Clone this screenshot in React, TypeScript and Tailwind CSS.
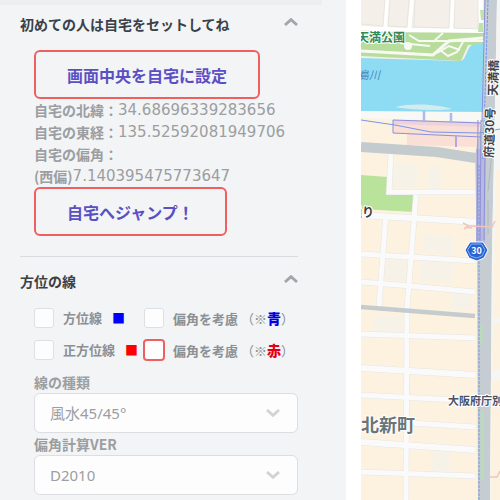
import type { ReactNode } from "react"

const jp = "font-['Noto_Sans_CJK_JP',sans-serif]"

const location = [
  { label: "自宅の北緯：", value: "34.68696339283656" },
  { label: "自宅の東経：", value: "135.52592081949706" },
  { label: "自宅の偏角：", value: "" },
  { label: "(西偏)", value: "7.140395475773647" },
]

const lines = [
  { id: "houi", name: "方位線", mark: "text-[#0000ff]", note: "青", noteColor: "text-[#0000e6]", box: "border-[#dee1e4]" },
  { id: "seihoui", name: "正方位線", mark: "text-[#ff0000]", note: "赤", noteColor: "text-[#e60012]", box: "border-[#ee6060] ring-1 ring-[#ee6060]" },
]

const selects = [
  { id: "kind", label: "線の種類", options: ["風水45/45°"] },
  { id: "ver", label: "偏角計算VER", options: ["D2010"] },
]

function Chevron({ className }: { className: string }) {
  return (
    <svg viewBox="0 0 14 8" className={className} fill="none" stroke="currentColor" strokeWidth="2.8">
      <path d="M1 1l6 5.400L13 1" />
    </svg>
  )
}

function SectionTitle({ children }: { children: ReactNode }) {
  return (
    <div className="flex items-center justify-between">
      <h2 className="text-sm leading-6 font-bold text-[#3a4148]">{children}</h2>
      <button type="button" aria-label="閉じる" className="text-[#a3a5a8]">
        <Chevron className="mb-1 h-2 w-[14px] rotate-180" />
      </button>
    </div>
  )
}

function OutlineButton({ children }: { children: ReactNode }) {
  return (
    <button
      type="button"
      className="block h-[49px] rounded-md border-2 border-[#ee6060] px-[31px] text-base leading-6 font-bold whitespace-nowrap text-[#5b4fc4]"
    >
      {children}
    </button>
  )
}

function Check({ id, className }: { id: string; className: string }) {
  return (
    <input
      id={id}
      type="checkbox"
      className={`h-5 w-5 shrink-0 appearance-none rounded-[3px] border bg-[#fdfdfe] checked:bg-[#5b4fc4] ${className}`}
    />
  )
}

function Sidebar() {
  return (
    <aside className="w-[346px] shrink-0 bg-[#f2f4f6]">
      <div className="mr-6 h-[5px] bg-[#eceef0]" />
      <section className="pt-[7px] pr-12 pl-5">
        <SectionTitle>初めての人は自宅をセットしてね</SectionTitle>
        <div className="mt-[14px] pl-[14px]">
          <OutlineButton>画面中央を自宅に設定</OutlineButton>
          <div className="text-sm leading-[22px] whitespace-nowrap text-[#9c9ea1]">
            {location.map((row) => (
              <p key={row.label} className="flex h-[22px]">
                <span className="font-bold">{row.label}</span>
                <span className="font-['DejaVu_Sans',sans-serif] text-[15px]">{row.value}</span>
              </p>
            ))}
          </div>
          <OutlineButton>自宅へジャンプ！</OutlineButton>
        </div>
        <hr className="mt-5 border-[#d9dbde]" />
      </section>
      <section className="pt-3 pr-12 pb-1 pl-5">
        <SectionTitle>方位の線</SectionTitle>
        <div className="mt-[15px] flex flex-col gap-3 pl-[14px] text-[13px] leading-5 font-bold whitespace-nowrap text-[#8b9095]">
          {lines.map((line) => (
            <div key={line.id} className="flex h-5">
              <div className="flex w-[110px] gap-[9px]">
                <Check id={line.id} className="border-[#dee1e4]" />
                <label htmlFor={line.id}>
                  {line.name}
                  <span className={`ml-[10px] ${line.mark}`}>■</span>
                </label>
              </div>
              <div className="flex gap-[9px]">
                <Check id={`${line.id}-offset`} className={line.box} />
                <label htmlFor={`${line.id}-offset`}>
                  偏角を考慮<span className="font-normal"> （※</span>
                  <b className={`text-sm leading-5 ${line.noteColor}`}>{line.note}</b>
                  <span className="font-normal">）</span>
                </label>
              </div>
            </div>
          ))}
        </div>
        <div className="mt-[11px] pl-[14px] text-[#9c9ea1]">
          {selects.map((select) => (
            <div key={select.id}>
              <label htmlFor={select.id} className="block text-sm leading-[22px] font-bold">
                {select.label}
              </label>
              <div className="relative">
                <select
                  id={select.id}
                  className="block h-10 w-full appearance-none rounded-md border border-[#dcdee1] bg-[#fdfdfe] px-[15px] font-['Noto_Sans','Noto_Sans_CJK_JP',sans-serif] text-[15px]"
                >
                  {select.options.map((option) => (
                    <option key={option}>{option}</option>
                  ))}
                </select>
                <Chevron className="pointer-events-none absolute top-4 right-[18px] h-2 w-[14px] text-[#d2d3d4]" />
              </div>
            </div>
          ))}
        </div>
      </section>
    </aside>
  )
}

function CityMap() {
  return (
    <svg
      viewBox="361 0 139 500"
      preserveAspectRatio="xMinYMin slice"
      className={`h-screen w-full ${jp}`}
      role="img"
      aria-label="地図"
    >
      <rect x="361" width="400" height="500" fill="#fdf2df" />

      {/* north bank blocks */}
      <path d="M361 0h139v60H361z" fill="#f4f0e9" />
      <g fill="none" stroke="#fff">
        <path d="M361 28l47 2 76 1" strokeWidth="4" />
        <path d="M387 0l-2 30M412 0l-3 31M453 0l-2 32" strokeWidth="4" />
        <path d="M480 0l2 36" strokeWidth="5" />
      </g>
      <g fill="none" stroke="#dedcd7" strokeWidth="0.6">
        <path d="M362 24l21 2 2-26M390 0l-2 26 19 1 2-27M415 0l-1 27 35 1 1-28M455 0l-1 28 24 1V0" />
      </g>
      <path d="M480 10h4v10h-3zM479 23h4v9h-5z" fill="#bfe3ab" />

      {/* riverside park */}
      <path d="M361 32l123 1v12l-16 0-7 16-100-5z" fill="#b7dc9c" />
      <path d="M361 51l72 4 16-14 34-3" fill="none" stroke="#f8f9f3" strokeWidth="3" />
      <path d="M400 43l30 3M409 35l10 6 65 0M443 33l-10 9M440 50l8 6 9-4 6-10M437 53l12-7 11 4" fill="none" stroke="#f8f9f3" strokeWidth="2" />
      <circle cx="408" cy="46" r="4" fill="#f8f9f3" />

      {/* river */}
      <path d="M361 58l100 3c5-1 6-14 11-16l12-2v70H361z" fill="#8edcf3" />
      <path d="M395 107c16-4 42-3 57 2-14 2-42 1-57-2z" fill="#d5ebed" />
      <path d="M361 111l123 1v10l-123-4z" fill="#f8f8f5" />
      <path d="M424 111v10M451 113v9" stroke="#a9bdea" strokeWidth="2.5" />

      {/* tinted buildings */}
      <g fill="#f7f2e7">
        <path d="M395 162l22 2v24l-24-1zM428 165l14 1-2 26h-14zM383 258l24 1-1 23-24-2zM419 258l34 2v23l-34-2zM375 315l28 2-1 15-30-1zM452 293l20 1v17l-22-2zM433 449l16 1v21h-17zM424 234l29 1v20l-30-2z" />
      </g>

      {/* station */}
      <path d="M393 120l87 2v25l-73-2v-11l-14-1z" fill="#f9dfd6" />
      <path d="M393 120l87 2v5l-87-3z" fill="#ecd2dd" />

      <path d="M361 175l27 2v16l27 1-1 18-53-3z" fill="#b9e39b" />

      {/* local streets, dark edge first */}
      <g fill="none" stroke="#e5e6e4">
        <path d="M361 215l117 7M361 368l114 7M361 442l114 8" strokeWidth="7" />
        <path d="M361 254l114 7M361 282l50 4 64 6M361 334l114 4M361 395l114 6M410 423l65 4M361 472l114 4" strokeWidth="6" />
        <path d="M391 152l-2 40h86M386 214l-7 92M416 195l-9 113-1 192" strokeWidth="6" />
      </g>
      <g fill="none" stroke="#fafafa">
        <path d="M361 215l117 7M361 368l114 7M361 442l114 8" strokeWidth="6" />
        <path d="M361 254l114 7M361 282l50 4 64 6M361 334l114 4M361 395l114 6M410 423l65 4M361 472l114 4" strokeWidth="5" />
        <path d="M391 152l-2 40h86M386 214l-7 92M416 195l-9 113-1 192" strokeWidth="5" />
      </g>

      {/* arterial roads */}
      <path d="M361 307l114 9" stroke="#c5cccf" strokeWidth="4.5" fill="none" />
      <path d="M361 147l76 5 38 6 25-2" stroke="#c3cbce" strokeWidth="10" fill="none" />
      <path d="M484 0h13l-3 160-2 90-2 250h-12l-1-250-2-95 8-40z" fill="#c5cdd3" />
      <path d="M497 0h3v500h-10l2-250z" fill="#f5f6f4" />
      <path d="M496 170l4-1v149l-7 1zM493 323h7v46l-8 2zM492 382l8-3v121h-9z" fill="#fdf2df" />
      <path d="M481 325v20M482 410v70" stroke="#b9ddb8" strokeWidth="2.5" />
      <path d="M492 151l-4 40M488 200v34" stroke="#aeb9b6" strokeWidth="1" />

      {/* railways */}
      <path d="M476 149h10l-1 95h-9z" fill="#b8b8e0" />
      <g fill="none" stroke="#8e90d8" strokeWidth="1">
        <path d="M393 120v13l88 4M393 120l88 3M478 120l-1 125M481 120l-1 125M485 150l-1 90M485 0l-3 122" />
        <path d="M361 120l34 5 36 7 48 1 21-4" stroke="#7896ea" />
        <path d="M456 135v12" stroke="#b7a7e0" strokeWidth="2" />
        <path d="M488 0l-5 160M479 165v335" stroke="#6e9bea" strokeDasharray="3 1" />
      </g>
      <path d="M463 223l6 3-5 3M470 226l22 1 3-6M465 227l7 1M489 477h8l3-6" fill="none" stroke="#efc5bd" strokeWidth="1.5" />

      {/* route 30 shield */}
      <path d="M470 242h13l5 8-4 8-7 3-8-3-4-8z" fill="#2864d4" stroke="#fff" />
      <path d="M471.500 244h10l3.500 6-3 6-5.500 2-6-2-3-6z" fill="none" stroke="#b8d0f7" strokeWidth="0.7" />
      <text x="476.500" y="254" textAnchor="middle" className="fill-white text-[9px] font-bold">30</text>

      <g stroke="#fff" strokeWidth="2" paintOrder="stroke" strokeLinejoin="round">
        <text x="357" y="42" className="fill-[#2f8a57] text-[12px] font-bold">天満公園</text>
        <text x="350" y="217" className="fill-[#3c4046] text-[12px] font-bold">通り</text>
        <text x="448" y="405" className="fill-[#4a5068] text-[11px] font-bold">大阪府庁別館</text>
        <text x="361" y="432" className="fill-[#6b7577] text-[18px] font-bold">北新町</text>
        <text transform="translate(493 158) rotate(-88)" className="fill-[#3f444a] text-[12px] font-bold">府道30号</text>
        <text transform="translate(497 96) rotate(-88)" className="fill-[#3f444a] text-[12px] font-bold">天満橋</text>
      </g>
      <text x="358" y="79" className="fill-[#4688bd] text-[11px] italic">島川</text>
    </svg>
  )
}

export default function App() {
  return (
    <div className={`flex min-h-screen bg-white ${jp}`}>
      <Sidebar />
      <main className="ml-[15px] min-w-0 flex-1 overflow-hidden">
        <CityMap />
      </main>
    </div>
  )
}
